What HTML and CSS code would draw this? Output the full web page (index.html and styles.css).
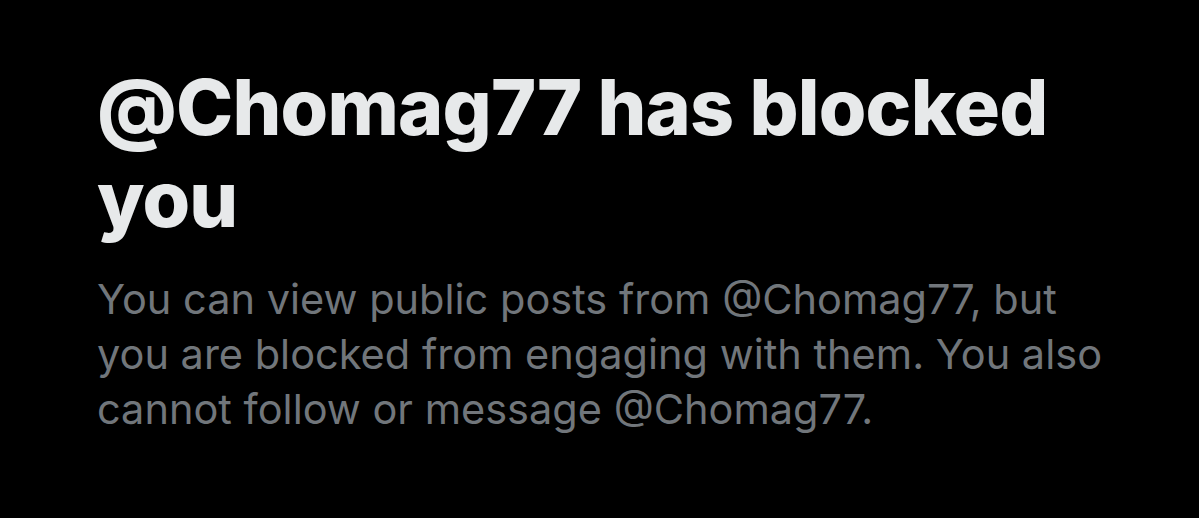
FILE: index.html
```html
<!DOCTYPE html>
<html>
<head>
<meta charset="utf-8">
<link rel="stylesheet" href="styles.css">
</head>
<body>
<main class="panel">
  <h1 class="title">@Chomag77 has blocked you</h1>
  <p class="desc">You can view public posts from @Chomag77, but you are blocked from engaging with them. You also cannot follow or message @Chomag77.</p>
</main>
</body>
</html>
```
FILE: styles.css
```css
html, body {
  margin: 0;
  padding: 0;
  background: #000;
  height: 100%;
}
.panel {
  padding: 61px 60px 0 97px;
  display: flex;
  flex-direction: column;
  gap: 27px;
}
.title {
  margin: 0;
  font-family: "Inter", "Liberation Sans", sans-serif;
  font-weight: 800;
  font-size: 77px;
  line-height: 92px;
  letter-spacing: -0.8px;
  color: #e7e9ea;
  max-width: 1000px;
}
.desc {
  margin: 0;
  font-family: "Inter", "Liberation Sans", sans-serif;
  font-weight: 400;
  font-size: 41.5px;
  line-height: 55px;
  color: #71767b;
  max-width: 1020px;
}
```
